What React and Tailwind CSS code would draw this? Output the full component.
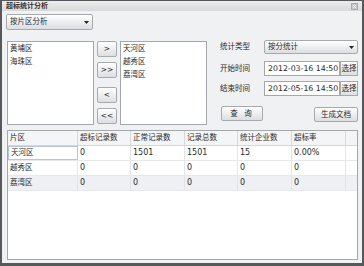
import React from 'react';

const btn = 'bg-linear-to-b from-white to-[#dcdee2] border border-[#a6a9ae] rounded-[2px] flex items-center justify-center text-[#2a2a2a]';

const cols = ['片区', '超标记录数', '正常记录数', '记录总数', '统计企业数', '超标率', ''];
const rows = [
  ['天河区', '0', '1501', '1501', '15', '0.00%', ''],
  ['越秀区', '0', '0', '0', '0', '0', ''],
  ['荔湾区', '0', '0', '0', '0', '0', ''],
];
const grid = 'grid grid-cols-[70px_53px_54px_53px_54px_54px_1fr]';

const Caret = () => (
  <svg width="5" height="3" viewBox="0 0 5 3" className="shrink-0">
    <path d="M0 0h5L2.5 3z" fill="#222" />
  </svg>
);

const App = () => {
  return (
    <div className="w-[364px] h-[266px] bg-[#f0f1f3] border-x-2 border-t border-b-[3px] border-[#56585c] text-[7.5px] text-[#2a2a2a] font-['DejaVu_Sans','Noto_Sans_CJK_SC',sans-serif] overflow-hidden">
      {/* Title bar */}
      <div className="h-[10px] bg-linear-to-b from-[#ececec] to-[#d9dadc] flex items-center justify-between pl-[4px] pr-[4px]">
        <span className="font-bold text-[7px] text-[#333]">超标统计分析</span>
        <svg width="7" height="7" viewBox="0 0 7 7">
          <rect x="0.5" y="0.5" width="6" height="6" fill="#c8c9cc" stroke="#a8aaad" />
          <path d="M2 2l3 3M5 2l-3 3" stroke="#eee" strokeWidth="0.9" />
        </svg>
      </div>

      <div className="pl-[5px] pr-[4px]">
        {/* Mode select */}
        <div className={`${btn} mt-[3px] w-[87px] h-[16px] -ml-px !justify-between px-[3px]`}>
          <span>按片区分析</span>
          <Caret />
        </div>

        {/* Lists + form */}
        <div className="flex mt-[11px] h-[84px]">
          <div className="w-[87px] bg-white border border-[#a4a7ab] px-[2px] leading-[13px]">
            <div>黄埔区</div>
            <div>海珠区</div>
          </div>
          <div className="ml-[3px] w-[20px] flex flex-col">
            <div className={`${btn} h-[16px]`}>&gt;</div>
            <div className={`${btn} h-[16px] mt-[5px]`}>&gt;&gt;</div>
            <div className={`${btn} h-[16px] mt-[9px]`}>&lt;</div>
            <div className={`${btn} h-[16px] mt-[5px]`}>&lt;&lt;</div>
          </div>
          <div className="ml-[3px] w-[87px] bg-white border border-[#a4a7ab] px-[2px] leading-[13px]">
            <div>天河区</div>
            <div>越秀区</div>
            <div>荔湾区</div>
          </div>

          <div className="ml-[13px] flex-1 flex flex-col">
            <div className="flex items-center h-[14px] -mt-px">
              <span className="w-[44px]">统计类型</span>
              <div className={`${btn} flex-1 h-[14px] !justify-between px-[3px]`}>
                <span>按分统计</span>
                <Caret />
              </div>
            </div>
            <div className="flex items-center h-[15px] mt-[7px]">
              <span className="w-[44px]">开始时间</span>
              <div className="w-[76px] h-[15px] bg-white border border-[#a4a7ab] flex items-center pl-[3px] text-[7.8px] whitespace-nowrap overflow-hidden">2012-03-16 14:50</div>
              <div className={`${btn} flex-1 h-[15px] !rounded-none`}>选择</div>
            </div>
            <div className="flex items-center h-[15px] mt-[5px]">
              <span className="w-[44px]">结束时间</span>
              <div className="w-[76px] h-[15px] bg-white border border-[#a4a7ab] flex items-center pl-[3px] text-[7.8px] whitespace-nowrap overflow-hidden">2012-05-16 14:50</div>
              <div className={`${btn} flex-1 h-[15px] !rounded-none`}>选择</div>
            </div>
            <div className="flex justify-between mt-[10px] pl-px">
              <div className={`${btn} w-[42px] h-[15px] tracking-[2px]`}>查 询</div>
              <div className={`${btn} w-[44px] h-[15px] mt-[1px]`}>生成文档</div>
            </div>
          </div>
        </div>

        {/* Result table */}
        <div className="mt-[5px] h-[130px] w-[351px] bg-white border border-[#a4a7ab]">
          <div className={`${grid} h-[15px] bg-[#f4f5f7] border-b border-[#d3d6da]`}>
            {cols.map((c, i) => (
              <div key={i} className="flex items-center pl-[2px] border-r border-[#d6d8dc] last:border-r-0">{c}</div>
            ))}
          </div>
          {rows.map((r, ri) => (
            <div key={ri} className={`${grid} h-[15px] border-b border-[#e6e8eb] ${ri === 2 ? 'bg-[#eef0f4]' : 'bg-white'}`}>
              {r.map((c, i) => (
                <div
                  key={i}
                  className={`flex items-center pl-[2px] ${i > 0 ? 'text-[8px]' : ''} ${ri === 0 && i === 0 ? 'border border-[#b6c6d4]' : 'border-r border-[#e2e4e7]'} ${i === 6 ? 'border-r-0' : ''}`}
                >
                  {c}
                </div>
              ))}
            </div>
          ))}
        </div>
      </div>
    </div>
  );
};

export default App;
